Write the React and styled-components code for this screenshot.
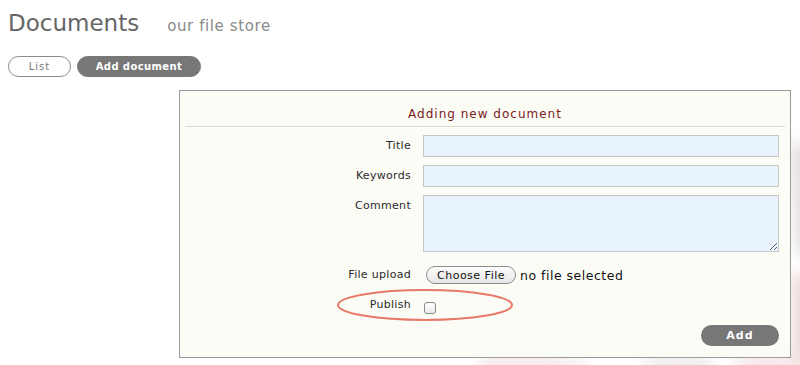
import styled, { createGlobalStyle } from "styled-components";

const GlobalStyle = createGlobalStyle`
  body {
    margin: 0;
    background: #fff;
    font-family: "DejaVu Sans", Verdana, sans-serif;
    overflow: hidden;
  }
`;

const Page = styled.div`
  position: relative;
  width: 800px;
  height: 365px;
  padding: 0 8px;
  box-sizing: border-box;
`;

const Watermark = styled.svg`
  position: absolute;
  left: 0;
  top: 0;
  width: 800px;
  height: 365px;
  z-index: 0;
  pointer-events: none;
`;

const Content = styled.div`
  position: relative;
  z-index: 1;
`;

const Header = styled.div`
  display: flex;
  align-items: baseline;
  gap: 28px;
  height: 44px;
  padding-top: 10px;
  box-sizing: border-box;
`;

const Title = styled.h1`
  margin: 0;
  font-size: 23px;
  font-weight: normal;
  color: #666;
`;

const Subtitle = styled.span`
  font-size: 15px;
  color: #8a8a8a;
  letter-spacing: 0.6px;
`;

const Tabs = styled.div`
  display: flex;
  gap: 6px;
  margin-top: 12px;
`;

const Tab = styled.button`
  height: 21px;
  width: ${(p) => (p.$active ? 124 : 63)}px;
  padding: 0;
  border-radius: 11px;
  border: 1px solid ${(p) => (p.$active ? "#777" : "#8a8a8a")};
  background: ${(p) => (p.$active ? "#777" : "#fff")};
  color: ${(p) => (p.$active ? "#fff" : "#777")};
  font-family: "DejaVu Sans", sans-serif;
  font-size: 10px;
  font-weight: ${(p) => (p.$active ? "bold" : "normal")};
  letter-spacing: ${(p) => (p.$active ? 0.4 : 1)}px;
  cursor: pointer;
`;

const Panel = styled.div`
  margin: 13px 0 0 171px;
  width: 612px;
  height: 268px;
  box-sizing: border-box;
  border: 1px solid #9a9a9a;
  background: #fcfcf7;
  padding: 0 5px;
`;

const PanelTitle = styled.div`
  text-align: center;
  font-size: 12px;
  line-height: 14px;
  letter-spacing: 1px;
  color: #7b1b1b;
  padding: 16px 0 5px;
  border-bottom: 1px solid #dcdcd6;
`;

const Form = styled.div`
  display: grid;
  grid-template-columns: 226px 356px;
  column-gap: 12px;
  row-gap: 8px;
  padding-top: 8px;
  align-items: start;
`;

const Label = styled.label`
  text-align: right;
  font-size: 11px;
  letter-spacing: 0.3px;
  color: #2a2a2a;
  line-height: 22px;
  margin-top: ${(p) => p.$top || 0}px;
`;

const TextInput = styled.input`
  height: 22px;
  box-sizing: border-box;
  border: 1px solid #c6c6c6;
  background: #e8f3fd;
  margin: 0;
  outline: none;
`;

const TextArea = styled.textarea`
  height: 57px;
  box-sizing: border-box;
  border: 1px solid #c6c6c6;
  background: #e8f3fd;
  margin: 0;
  outline: none;
  resize: both;
`;

const FileRow = styled.div`
  display: flex;
  align-items: center;
  gap: 4px;
  height: 22px;
  margin-top: 4px;
`;

const FileButton = styled.button`
  height: 18px;
  padding: 0 10px;
  margin-left: 3px;
  border: 1px solid #8c8c8c;
  border-radius: 9px;
  background: linear-gradient(#fdfdfd, #e6e6e6);
  font-family: "DejaVu Sans", sans-serif;
  font-size: 11px;
  letter-spacing: 0.5px;
  color: #111;
`;

const FileName = styled.span`
  font-size: 12.5px;
  letter-spacing: 0.5px;
  color: #111;
`;

const CheckRow = styled.div`
  display: flex;
  align-items: flex-start;
  height: 22px;
`;

const Check = styled.input`
  appearance: none;
  width: 12px;
  height: 12px;
  margin: 8px 0 0 1px;
  border: 1px solid #8a8a8a;
  border-radius: 3px;
  background: linear-gradient(#fff, #eaeaea);
`;

const PublishLabel = styled(Label)`
  position: relative;
`;

// red annotation ellipse drawn over the publish row
const Ring = styled.svg`
  position: absolute;
  left: 152px;
  top: -5px;
  width: 180px;
  height: 36px;
  overflow: visible;
  pointer-events: none;
`;

const Footer = styled.div`
  display: flex;
  justify-content: flex-end;
  padding: 9px 6px 0 0;
`;

const AddButton = styled.button`
  width: 78px;
  height: 21px;
  border: none;
  border-radius: 11px;
  background: #777;
  color: #fff;
  font-family: "DejaVu Sans", sans-serif;
  font-size: 11px;
  font-weight: bold;
  letter-spacing: 1px;
`;

export default function App() {
  return (
    <Page>
      <GlobalStyle />
      <Watermark viewBox="0 0 800 365">
        <defs>
          <filter id="soft" x="-50%" y="-50%" width="200%" height="200%">
            <feGaussianBlur stdDeviation="7" />
          </filter>
        </defs>
        <g filter="url(#soft)" opacity="0.7">
          <path d="M790 140 L812 150 L812 260 L795 250 Z" fill="#d9d2d2" />
          <path d="M792 270 L812 280 L812 365 L792 365 Z" fill="#e7c8c8" />
          <path d="M480 357 L560 357 L600 370 L480 370 Z" fill="#f0d8d8" />
          <path d="M640 357 L720 357 L700 370 L650 370 Z" fill="#e2dcdc" />
          <path d="M730 357 L800 357 L800 370 L740 370 Z" fill="#eed4d4" />
        </g>
      </Watermark>
      <Content>
        <Header>
          <Title>Documents</Title>
          <Subtitle>our file store</Subtitle>
        </Header>
        <Tabs>
          <Tab>List</Tab>
          <Tab $active>Add document</Tab>
        </Tabs>
        <Panel>
          <PanelTitle>Adding new document</PanelTitle>
          <Form>
            <Label>Title</Label>
            <TextInput type="text" />
            <Label>Keywords</Label>
            <TextInput type="text" />
            <Label>Comment</Label>
            <TextArea />
            <Label $top={4}>File upload</Label>
            <FileRow>
              <FileButton type="button">Choose File</FileButton>
              <FileName>no file selected</FileName>
            </FileRow>
            <PublishLabel>
              Publish
              <Ring viewBox="0 0 180 36">
                <ellipse cx="88" cy="16" rx="87" ry="15" fill="none" stroke="#e4614f" strokeWidth="2" opacity="0.85" />
              </Ring>
            </PublishLabel>
            <CheckRow>
              <Check type="checkbox" />
            </CheckRow>
          </Form>
          <Footer>
            <AddButton type="button">Add</AddButton>
          </Footer>
        </Panel>
      </Content>
    </Page>
  );
}
